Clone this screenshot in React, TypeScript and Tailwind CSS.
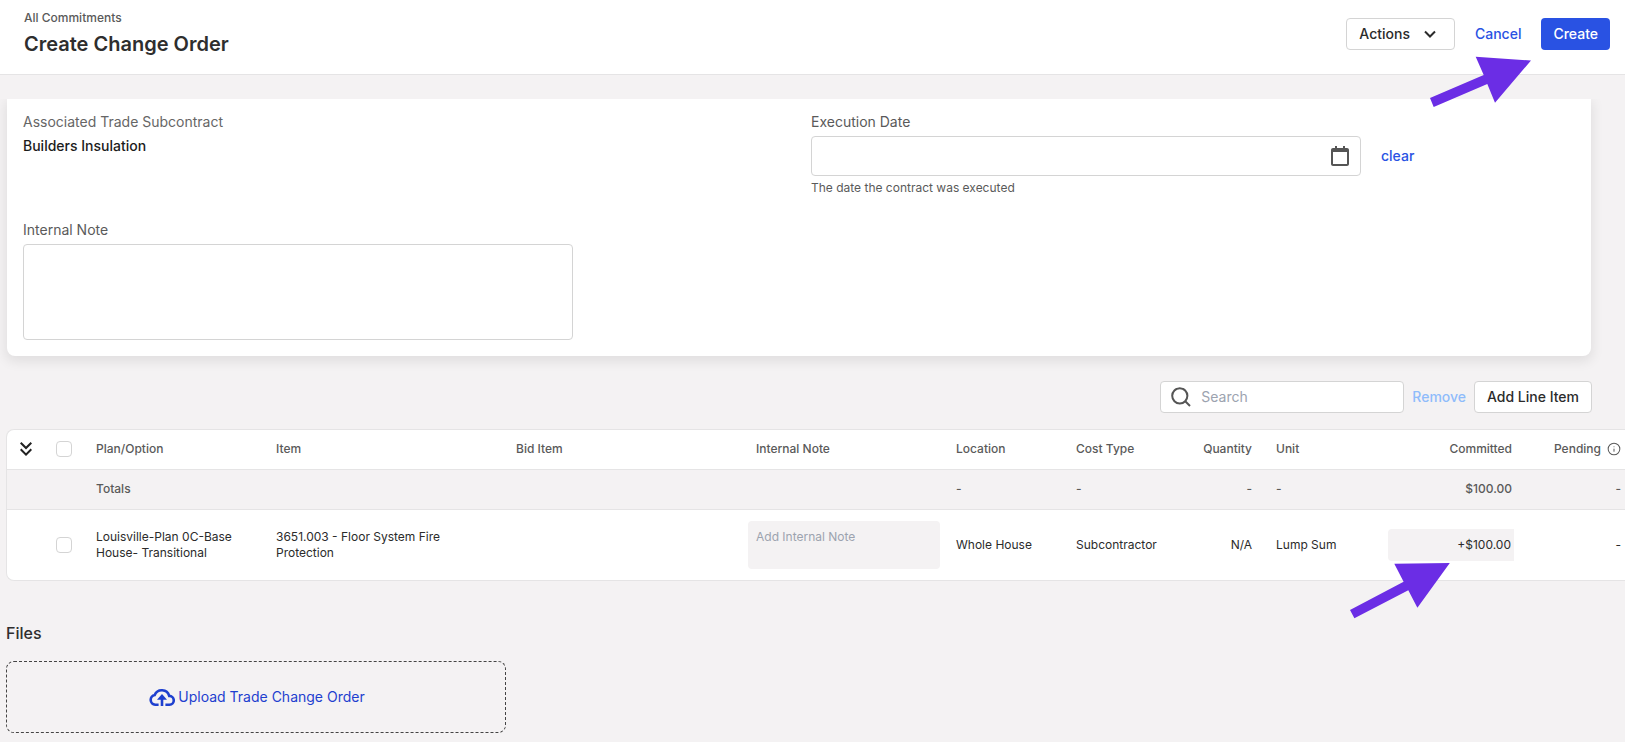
import { useState } from 'react'
import type { ReactNode } from 'react'
import { MdKeyboardDoubleArrowDown } from 'react-icons/md'
import { Info } from 'lucide-react'

interface Column {
  label: string
  width: string
  align?: 'right'
  total?: string
  info?: boolean
}

const columns: Column[] = [
  { label: 'Plan/Option', width: 'w-[180px]', total: 'Totals' },
  { label: 'Item', width: 'w-[240px]' },
  { label: 'Bid Item', width: 'w-[240px]' },
  { label: 'Internal Note', width: 'w-[200px]' },
  { label: 'Location', width: 'w-[120px]', total: '-' },
  { label: 'Cost Type', width: 'w-[120px]', total: '-' },
  { label: 'Quantity', width: 'w-[80px]', align: 'right', total: '-' },
  { label: 'Unit', width: 'w-[120px]', total: '-' },
  { label: 'Committed', width: 'w-[140px]', align: 'right', total: '$100.00' },
  { label: 'Pending', width: 'w-[109px]', align: 'right', total: '-', info: true },
]

const CalendarIcon = () => (
  <svg width="18" height="20" viewBox="0 0 18 20" fill="currentColor" aria-hidden="true">
    <path d="M16 2h-2V0h-2v2H6V0H4v2H2C.9 2 0 2.9 0 4v14c0 1.1.9 2 2 2h14c1.1 0 2-.9 2-2V4c0-1.1-.9-2-2-2zm0 16H2V6h14v12z" />
  </svg>
)

const SearchIcon = () => (
  <svg className="shrink-0" width="20" height="20" viewBox="0 0 20 20" fill="none" stroke="currentColor" strokeWidth="2" aria-hidden="true">
    <circle cx="8.8" cy="8.8" r="7.6" />
    <path d="M14 14l5 5" />
  </svg>
)

const CloudUploadIcon = () => (
  <svg width="26" height="20" viewBox="0 0 26 20" fill="none" stroke="currentColor" strokeWidth="2.6" aria-hidden="true">
    <path d="M9.6 17.7H6.2a4.9 4.9 0 0 1-.5-9.7 7.7 7.7 0 0 1 14.5.9 4.4 4.4 0 0 1 .3 8.8H16.4" />
    <path d="M13 19V11" />
    <path d="M13 7l5 5.8H8z" fill="currentColor" stroke="none" />
  </svg>
)

const Checkbox = ({ label }: { label: string }) => (
  <input
    type="checkbox"
    aria-label={label}
    className="block w-4 h-4 appearance-none rounded border border-[#d4d4d4] bg-white checked:bg-[#2952e3]"
  />
)

const OutlineButton = ({ children }: { children: ReactNode }) => (
  <button
    type="button"
    className="flex h-8 items-center gap-2 rounded border border-[#d4d4d4] bg-white px-3 text-sm font-medium text-[#2b2b2b]"
  >
    {children}
  </button>
)

const Header = () => (
  <header className="flex items-start justify-between border-b border-[#e5e4e5] bg-white pr-[15px] pl-6 pt-2 pb-4">
    <div>
      <a href="#" className="block text-xs leading-5 font-medium text-[#5a5a5a]">
        All Commitments
      </a>
      <h1 className="mt-0.5 text-xl leading-7 font-semibold text-[#2e2e2e]">Create Change Order</h1>
    </div>
    <div className="relative mt-2.5 flex items-center gap-5">
      <OutlineButton>
        Actions
        <svg className="mx-1" width="16" height="16" viewBox="0 0 16 16" fill="none" stroke="currentColor" strokeWidth="2" aria-hidden="true">
          <path d="M3 5.5l5 5 5-5" />
        </svg>
      </OutlineButton>
      <button type="button" className="text-sm font-medium text-[#2952e3]">
        Cancel
      </button>
      <button type="button" className="h-8 rounded bg-[#2952e3] px-3 text-sm font-medium text-white">
        Create
      </button>
      <svg className="absolute top-9 right-[76px] z-10" width="106" height="56" viewBox="1428 54 106 56" fill="#6b2de5" aria-hidden="true">
        <path d="M1430 98L1483.7 75L1475.7 56.7L1531 60.5L1495 102.7L1487.3 84L1433.7 107Z" />
      </svg>
    </div>
  </header>
)

const DetailsCard = () => {
  const [date, setDate] = useState('')

  return (
    <div className="mt-6 overflow-hidden pb-[25px]">
      <section className="mr-[34px] ml-[7px] grid grid-cols-2 gap-x-6 rounded-b-lg bg-white px-4 pt-[13px] pb-4 shadow-[0_4px_12px_2px_rgba(0,0,0,0.08)]">
        <div>
          <p className="text-sm text-[#666]">Associated Trade Subcontract</p>
          <p className="mt-1 text-sm font-medium text-[#1c1c1c]">Builders Insulation</p>
        </div>
        <div>
          <label htmlFor="execution-date" className="block text-sm text-[#5a5a5a]">
            Execution Date
          </label>
          <div className="mt-1 flex items-center gap-5">
            <div className="flex h-10 w-full max-w-[550px] items-center rounded border border-[#d4d4d4] pr-[11px] pl-3 text-[#555]">
              <input
                id="execution-date"
                type="text"
                value={date}
                onChange={(e) => setDate(e.target.value)}
                className="flex-1 bg-transparent text-sm outline-none"
              />
              <CalendarIcon />
            </div>
            <button type="button" onClick={() => setDate('')} className="text-sm font-medium text-[#2952e3]">
              clear
            </button>
          </div>
          <p className="mt-1 text-xs text-[#5a5a5a]">The date the contract was executed</p>
        </div>
        <div className="mt-6">
          <label htmlFor="internal-note" className="block text-sm text-[#5a5a5a]">
            Internal Note
          </label>
          <textarea
            id="internal-note"
            className="mt-1 block h-24 w-full max-w-[550px] resize-none rounded border border-[#d4d4d4] p-3 text-sm"
          />
        </div>
      </section>
    </div>
  )
}

const LineItems = () => (
  <section className="relative pl-1.5">
    <div className="flex items-center justify-end gap-2 pr-[33px]">
      <label className="flex h-8 w-[244px] items-center gap-2.5 rounded border border-[#d4d4d4] bg-white px-2.5 text-[#555]">
        <SearchIcon />
        <input
          type="search"
          placeholder="Search"
          aria-label="Search line items"
          className="w-full min-w-0 text-sm outline-none placeholder:text-[#9ca3af]"
        />
      </label>
      <button type="button" disabled className="text-sm font-medium text-[#8fbcfb]">
        Remove
      </button>
      <OutlineButton>Add Line Item</OutlineButton>
    </div>

    <div className="mt-4 overflow-hidden rounded-l-lg border border-r-0 border-[#e5e4e5] bg-white">
      <table className="w-[1626px] table-fixed text-left text-xs text-[#2b2b2b]">
        <thead>
          <tr className="h-[39px] border-b border-[#e5e4e5] text-[#5a5a5a]">
            <th className="w-[37px]">
              <button type="button" aria-label="Expand all" className="mx-auto block text-[#222]">
                <MdKeyboardDoubleArrowDown size={24} />
              </button>
            </th>
            <th className="w-10 px-3">
              <Checkbox label="Select all" />
            </th>
            {columns.map((col) => (
              <th key={col.label} className={`${col.width} px-3 font-medium ${col.align === 'right' ? 'text-right' : ''}`}>
                {col.info ? (
                  <span className="flex items-center justify-end gap-1.5">
                    {col.label}
                    <Info size={14} strokeWidth={1.75} />
                  </span>
                ) : (
                  col.label
                )}
              </th>
            ))}
          </tr>
        </thead>
        <tbody>
          <tr className="h-10 border-b border-[#e5e4e5] bg-[#f4f2f3] font-medium text-[#5a5a5a]">
            <td />
            <td />
            {columns.map((col) => (
              <td key={col.label} className={`px-3 ${col.align === 'right' ? 'text-right' : ''}`}>
                {col.total}
              </td>
            ))}
          </tr>
          <tr className="h-[71px]">
            <td />
            <td className="px-3">
              <Checkbox label="Select 3651.003 - Floor System Fire Protection" />
            </td>
            <td className="px-3">Louisville-Plan 0C-Base House- Transitional</td>
            <td className="px-3">3651.003 - Floor System Fire Protection</td>
            <td className="px-3" />
            <td className="px-1">
              <textarea
                placeholder="Add Internal Note"
                aria-label="Add Internal Note"
                className="block h-12 w-full resize-none rounded bg-[#f4f2f3] p-2 outline-none placeholder:text-[#9ca3af]"
              />
            </td>
            <td className="px-3">Whole House</td>
            <td className="px-3">Subcontractor</td>
            <td className="px-3 text-right">N/A</td>
            <td className="px-3">Lump Sum</td>
            <td className="pr-2.5 pl-1">
              <input
                type="text"
                defaultValue="+$100.00"
                aria-label="Committed"
                className="block h-8 w-full rounded-l bg-[#f4f2f3] px-[3px] text-right outline-none"
              />
            </td>
            <td className="px-3 text-right">-</td>
          </tr>
        </tbody>
      </table>
    </div>
    <svg className="absolute top-[180px] left-[1348px] z-10" width="104" height="60" viewBox="1348 561 104 60" fill="#6b2de5" aria-hidden="true">
      <path d="M1350 610L1403.6 581.7L1394.3 563.7L1449.8 563L1417.4 607.7L1408.3 590.3L1354.4 618.3Z" />
    </svg>
  </section>
)

const Files = () => (
  <section className="mt-10 px-1.5">
    <h2 className="text-base font-medium text-[#2e2e2e]">Files</h2>
    <button
      type="button"
      className="mt-4 flex h-[72px] w-full max-w-[500px] items-center justify-center gap-[3px] rounded-lg border border-dashed border-[#444] pl-0.5 text-sm text-[#1e40cf]"
    >
      <CloudUploadIcon />
      Upload Trade Change Order
    </button>
  </section>
)

const App = () => (
  <div className="min-h-screen overflow-hidden bg-[#f4f2f3] pb-2 font-['Inter',sans-serif]">
    <Header />
    <DetailsCard />
    <LineItems />
    <Files />
  </div>
)

export default App
